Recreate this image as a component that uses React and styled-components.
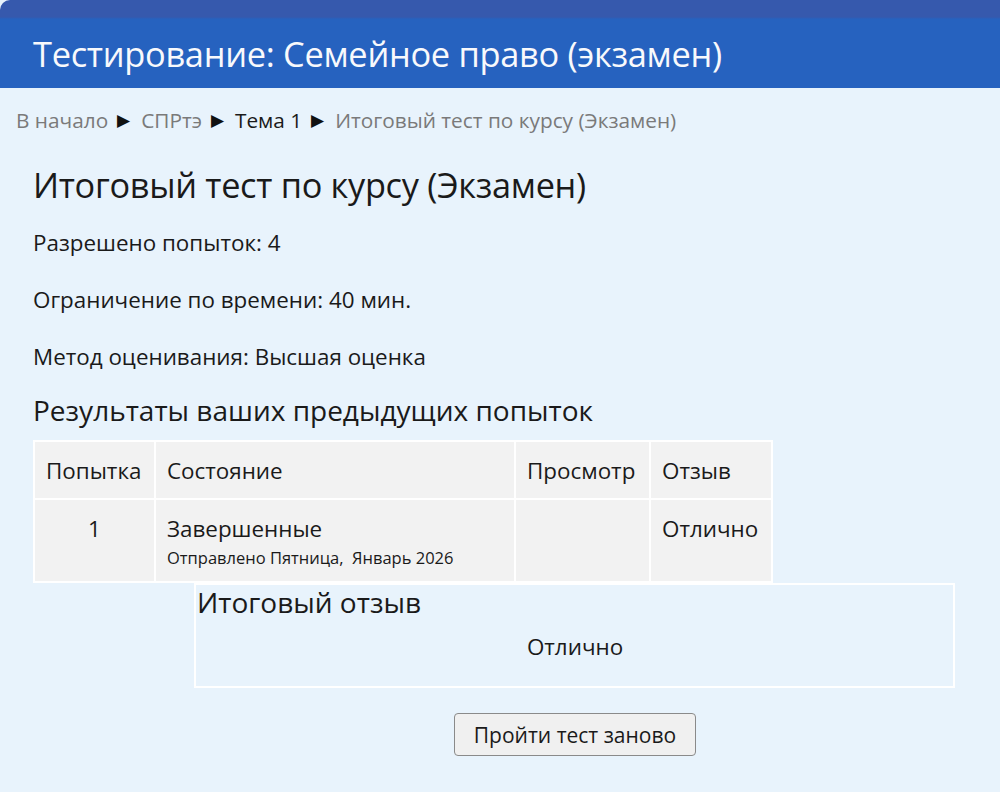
import styled, { createGlobalStyle } from "styled-components";

const Global = createGlobalStyle`
  html, body {
    margin: 0;
    padding: 0;
    background: #e8f3fc;
  }
  body {
    font-family: "Open Sans", "Noto Sans", sans-serif;
    color: #1a1a1a;
  }
`

const Page = styled.div`
  min-height: 792px;
  background: #e8f3fc;
`

const Header = styled.header`
  height: 88px;
  background: linear-gradient(to bottom, #3659ad 0, #3659ad 17px, #2662bf 19px, #2662bf 100%);
  border-top-left-radius: 10px;
  display: flex;
  align-items: flex-end;
  padding: 0 0 11px 33px;
  box-sizing: border-box;
`

const HeaderTitle = styled.h1`
  margin: 0;
  color: #f8f9fc;
  font-weight: 400;
  font-size: 34.4px;
  letter-spacing: -0.3px;
`

const Crumbs = styled.nav`
  display: flex;
  align-items: center;
  gap: 8px;
  padding: 17px 0 0 16px;
  font-size: 20.8px;
  line-height: 30px;
`

const Crumb = styled.span`
  color: ${p => (p.current ? "#1a1a1a" : "#7a7a7a")};
`

const Sep = styled.span`
  color: #111;
  font-size: 17px;
  margin: 0 3px 0 1px;
`

const Main = styled.main`
  padding: 0 0 0 33px;
`

const Title = styled.h2`
  margin: 28px 0 0;
  font-weight: 400;
  font-size: 34.3px;
  line-height: 44px;
  letter-spacing: -0.3px;
`

const Info = styled.p`
  margin: 18px 0 0;
  font-size: 22.4px;
  line-height: 35px;
  & + & {
    margin-top: 22px;
  }
`

const Section = styled.h3`
  margin: 18px 0 0;
  font-weight: 400;
  font-size: 28px;
  line-height: 36px;
`

const Table = styled.table`
  margin-top: 12px;
  border-collapse: collapse;
  width: 740px;
  font-size: 22.4px;
`

const Th = styled.th`
  background: #f2f2f2;
  border: 2px solid #fff;
  font-weight: 400;
  text-align: left;
  padding: 0 11px;
  height: 58px;
  width: ${p => p.w}px;
  box-sizing: border-box;
`

const Td = styled.td`
  background: #f2f2f2;
  border: 2px solid #fff;
  padding: 13px 11px 12px;
  vertical-align: top;
  text-align: ${p => p.align || "left"};
  height: 82px;
  box-sizing: border-box;
`

const Sub = styled.div`
  font-size: 16.5px;
  margin-top: 2px;
`

const Feedback = styled.div`
  margin: 0 0 0 161px;
  width: 761px;
  height: 105px;
  box-sizing: border-box;
  border: 2px solid #fff;
  padding: 0 0 0 1px;
`

const FeedbackTitle = styled.div`
  font-size: 28px;
  line-height: 34px;
`

const FeedbackText = styled.div`
  text-align: center;
  font-size: 22.4px;
  margin-top: 12px;
`

const Actions = styled.div`
  display: flex;
  justify-content: center;
  width: 1000px;
  margin-left: -33px;
  margin-top: 25px;
  padding-left: 150px;
  box-sizing: border-box;
`

const Button = styled.button`
  font-family: inherit;
  font-size: 21px;
  color: #1a1a1a;
  background: #f0f0f0;
  border: 1px solid #8a8a8a;
  border-radius: 4px;
  height: 43px;
  padding: 0 19px;
`

export default function App() {
  return (
    <Page>
      <Global />
      <Header>
        <HeaderTitle>Тестирование: Семейное право (экзамен)</HeaderTitle>
      </Header>
      <Crumbs>
        <Crumb>В начало</Crumb>
        <Sep>▶</Sep>
        <Crumb>СПРтэ</Crumb>
        <Sep>▶</Sep>
        <Crumb current>Тема 1</Crumb>
        <Sep>▶</Sep>
        <Crumb>Итоговый тест по курсу (Экзамен)</Crumb>
      </Crumbs>
      <Main>
        <Title>Итоговый тест по курсу (Экзамен)</Title>
        <Info>Разрешено попыток: 4</Info>
        <Info>Ограничение по времени: 40 мин.</Info>
        <Info>Метод оценивания: Высшая оценка</Info>
        <Section>Результаты ваших предыдущих попыток</Section>
        <Table>
          <thead>
            <tr>
              <Th w={121}>Попытка</Th>
              <Th w={362}>Состояние</Th>
              <Th w={135}>Просмотр</Th>
              <Th w={122}>Отзыв</Th>
            </tr>
          </thead>
          <tbody>
            <tr>
              <Td align="center">1</Td>
              <Td>
                Завершенные
                <Sub>Отправлено Пятница,&nbsp;&nbsp;Январь 2026</Sub>
              </Td>
              <Td />
              <Td>Отлично</Td>
            </tr>
          </tbody>
        </Table>
        <Feedback>
          <FeedbackTitle>Итоговый отзыв</FeedbackTitle>
          <FeedbackText>Отлично</FeedbackText>
        </Feedback>
        <Actions>
          <Button>Пройти тест заново</Button>
        </Actions>
      </Main>
    </Page>
  );
}
